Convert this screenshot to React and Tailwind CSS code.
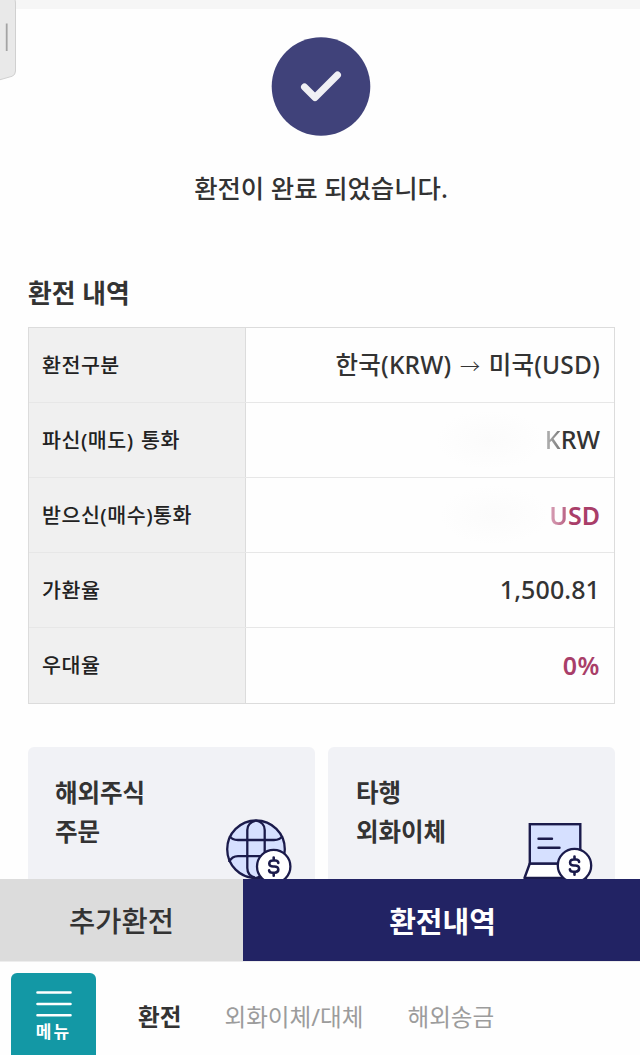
import React from "react";

const rows = [
    { label: "환전구분", from: "한국(KRW)", to: "미국(USD)" },
    { label: "파신(매도) 통화", currency: "KRW" },
    { label: "받으신(매수)통화", currency: "USD" },
    { label: "가환율", value: "1,500.81" },
    { label: "우대율", percent: "0" },
];

const EdgeHandle = () => (
    <svg className="absolute left-0 top-0" width="18" height="84" viewBox="0 0 18 84" fill="none">
        <path d="M-2 -2H14Q15.5 0 15.5 3V71Q15.5 75 12 76.3L-2 80.3Z" fill="#e9e9e9" stroke="#d0d0d0" />
        <path d="M6.7 23.5V51" stroke="#a4a4a4" strokeWidth="1.8" />
    </svg>
);

const DollarCoin = ({ cx, cy }) => (
    <g transform={`translate(${cx} ${cy})`}>
        <circle r="16.7" fill="#fff" stroke="#1b1b4b" strokeWidth="2.3" />
        <path
            d="M4.6 -3.6Q4.4 -6 1.5 -6H-0.8Q-4.4 -6 -4.4 -3Q-4.4 0 -0.5 0H0.8Q4.6 0 4.6 3.1Q4.6 6.2 1 6.2H-1Q-4.4 6.2 -4.6 3.8M0 -9V-6M0 6.2V9.2"
            stroke="#1b1b4b"
            strokeWidth="2.6"
            strokeLinecap="round"
        />
    </g>
);

const GlobeIcon = () => (
    <svg className="absolute left-[196px] top-[70px]" width="72" height="72" viewBox="0 0 72 72" fill="none">
        <circle cx="32" cy="32.3" r="28.8" fill="#d6e0ff" />
        <g stroke="#1b1b4b" strokeWidth="2.3">
            <circle cx="32" cy="32.3" r="28.8" />
            <path d="M5.5 19Q8 23 14 23H50Q56 23 58.5 19M5 45Q8 39.2 14 39.2H50Q56 39.2 59 45" />
            <path d="M32 3.5Q23.3 5.5 23.3 13V51Q23.3 59 32 61M32 3.5Q40.7 5.5 40.7 13V51Q40.7 59 32 61" />
        </g>
        <DollarCoin cx={49.7} cy={49.5} />
    </svg>
);

const LaptopIcon = () => (
    <svg className="absolute left-[194px] top-[70px]" width="76" height="72" viewBox="0 0 76 72" fill="none">
        <path d="M7.8 46.5H58.5L64 61H2.5Z" fill="#fff" stroke="#1b1b4b" strokeWidth="2.4" strokeLinejoin="round" />
        <rect x="7.8" y="7.2" width="50.5" height="39.3" fill="#d6e0ff" stroke="#1b1b4b" strokeWidth="2.4" />
        <path d="M16.5 21.8H30M16.5 30.8H37.5" stroke="#1b1b4b" strokeWidth="2.4" strokeLinecap="round" />
        <DollarCoin cx={52.5} cy={48.5} />
    </svg>
);

const DetailValue = ({ row }) => {
    if (row.from) {
        return (
            <span className="text-[24.5px] font-medium tracking-[0.2px]">
                {row.from} <span className="mr-[2px] ml-[2px] font-['Noto_Sans_CJK_KR',sans-serif] text-[20px] font-light">→</span> {row.to}
            </span>
        );
    }
    if (row.currency === "KRW") {
        return (
            <span className="text-[25px] font-medium">
                <span className="bg-linear-to-r from-[#b8b8b8] to-[#777] bg-clip-text text-transparent">K</span>RW
            </span>
        );
    }
    if (row.currency === "USD") {
        return (
            <span className="pt-px text-[25px] font-semibold text-[#a93e69]">
                <span className="bg-linear-to-r from-[#d9a4b9] to-[#b65c80] bg-clip-text text-transparent">U</span>SD
            </span>
        );
    }
    if (row.percent) {
        return (
            <span className="pt-px text-[25px] font-semibold tracking-[0.5px] text-[#a93e69]">
                {row.percent}%
            </span>
        );
    }
    return <span className="text-[25px] font-medium tracking-[0.1px]">{row.value}</span>;
};

const App = () => {
    return (
        <div className="relative flex h-[1055px] w-[640px] flex-col overflow-hidden bg-[#fefefe] font-['Noto_Sans','Noto_Sans_CJK_KR',sans-serif] text-[#333]">
            <main className="flex h-[879px] shrink-0 flex-col overflow-hidden">
                <div className="h-[9px] shrink-0 bg-[#f6f6f6]" />

                {/* Completion message */}
                <section className="flex h-[261px] shrink-0 flex-col items-center pt-7 pl-[2px]">
                    <svg width="100" height="100" viewBox="0 0 100 100" fill="none">
                        <circle cx="50" cy="49.5" r="49.3" fill="#40427a" />
                        <path d="M33.5 50L44 60.5L66.5 38" stroke="#f0f0f4" strokeWidth="7" strokeLinecap="round" strokeLinejoin="round" />
                    </svg>
                    <p className="mt-[33px] text-[25.4px] leading-9 font-medium">환전이 완료 되었습니다.</p>
                </section>

                <section className="mx-7 shrink-0">
                    <h2 className="h-[57px] pt-[5px] text-[25.8px] leading-9 font-bold">환전 내역</h2>
                    <dl className="w-[587px] border border-[#dcdcdc]">
                        {rows.map((row) => (
                            <div key={row.label} className="flex h-[75px] border-b border-[#e7e7e7] last:border-b-0">
                                <dt className="flex w-[217px] items-center border-r border-[#dcdcdc] bg-[#f0f0f0] pl-[13px] text-[20.6px] font-medium tracking-[0.5px] text-[#222] [word-spacing:1.5px]">
                                    {row.label}
                                </dt>
                                <dd className="flex flex-1 items-center justify-end pr-[14px] whitespace-nowrap">
                                    {row.currency && (
                                        <span className="h-[60px] w-[110px] rounded-full bg-radial from-[#fbfbfb] to-[#fefefe] to-70%" />
                                    )}
                                    <DetailValue row={row} />
                                </dd>
                            </div>
                        ))}
                    </dl>
                </section>

                {/* Shortcut cards */}
                <section className="mx-7 mt-[43px] grid w-[587px] shrink-0 grid-cols-2 gap-[13px]">
                    <div className="relative h-[180px] rounded-md bg-[#f1f2f6] pt-[26px] pl-[27px] text-[24.5px] leading-[39px] font-bold">
                        해외주식
                        <br />
                        주문
                        <GlobeIcon />
                    </div>
                    <div className="relative h-[180px] rounded-md bg-[#f1f2f6] pt-[26px] pl-[28px] text-[24.5px] leading-[39px] font-bold">
                        타행
                        <br />
                        외화이체
                        <LaptopIcon />
                    </div>
                </section>
            </main>

            <div className="flex h-[82px] shrink-0">
                <button className="w-[243px] bg-[#dcdcdc] pt-[3px] text-[28.5px] font-medium">추가환전</button>
                <button className="flex-1 bg-[#222364] pt-[3px] pl-[2px] text-[29px] font-bold text-white">환전내역</button>
            </div>

            <nav className="flex h-[94px] shrink-0 items-start border-t border-[#ededed] pt-[11px] pl-[11px]">
                <button className="flex h-[88px] w-[85px] flex-col items-center rounded-md bg-[#1398a5] pt-[17px] text-white">
                    <svg width="36" height="28" viewBox="0 0 36 28" stroke="#fff" strokeWidth="2.6" strokeLinecap="round">
                        <path d="M1.5 2.5H34.5M1.5 14H34.5M1.5 25.2H34.5" />
                    </svg>
                    <span className="mt-[2px] text-[17px] leading-6 font-bold tracking-[2px]">메뉴</span>
                </button>
                <div className="flex h-[89px] items-center text-[23.6px] whitespace-nowrap text-[#9c9c9c]">
                    <span className="ml-[42px] font-bold text-[#333]">환전</span>
                    <span className="ml-[43px]">외화이체/대체</span>
                    <span className="ml-[44px]">해외송금</span>
                </div>
            </nav>

            <EdgeHandle />
        </div>
    );
};

export default App;
